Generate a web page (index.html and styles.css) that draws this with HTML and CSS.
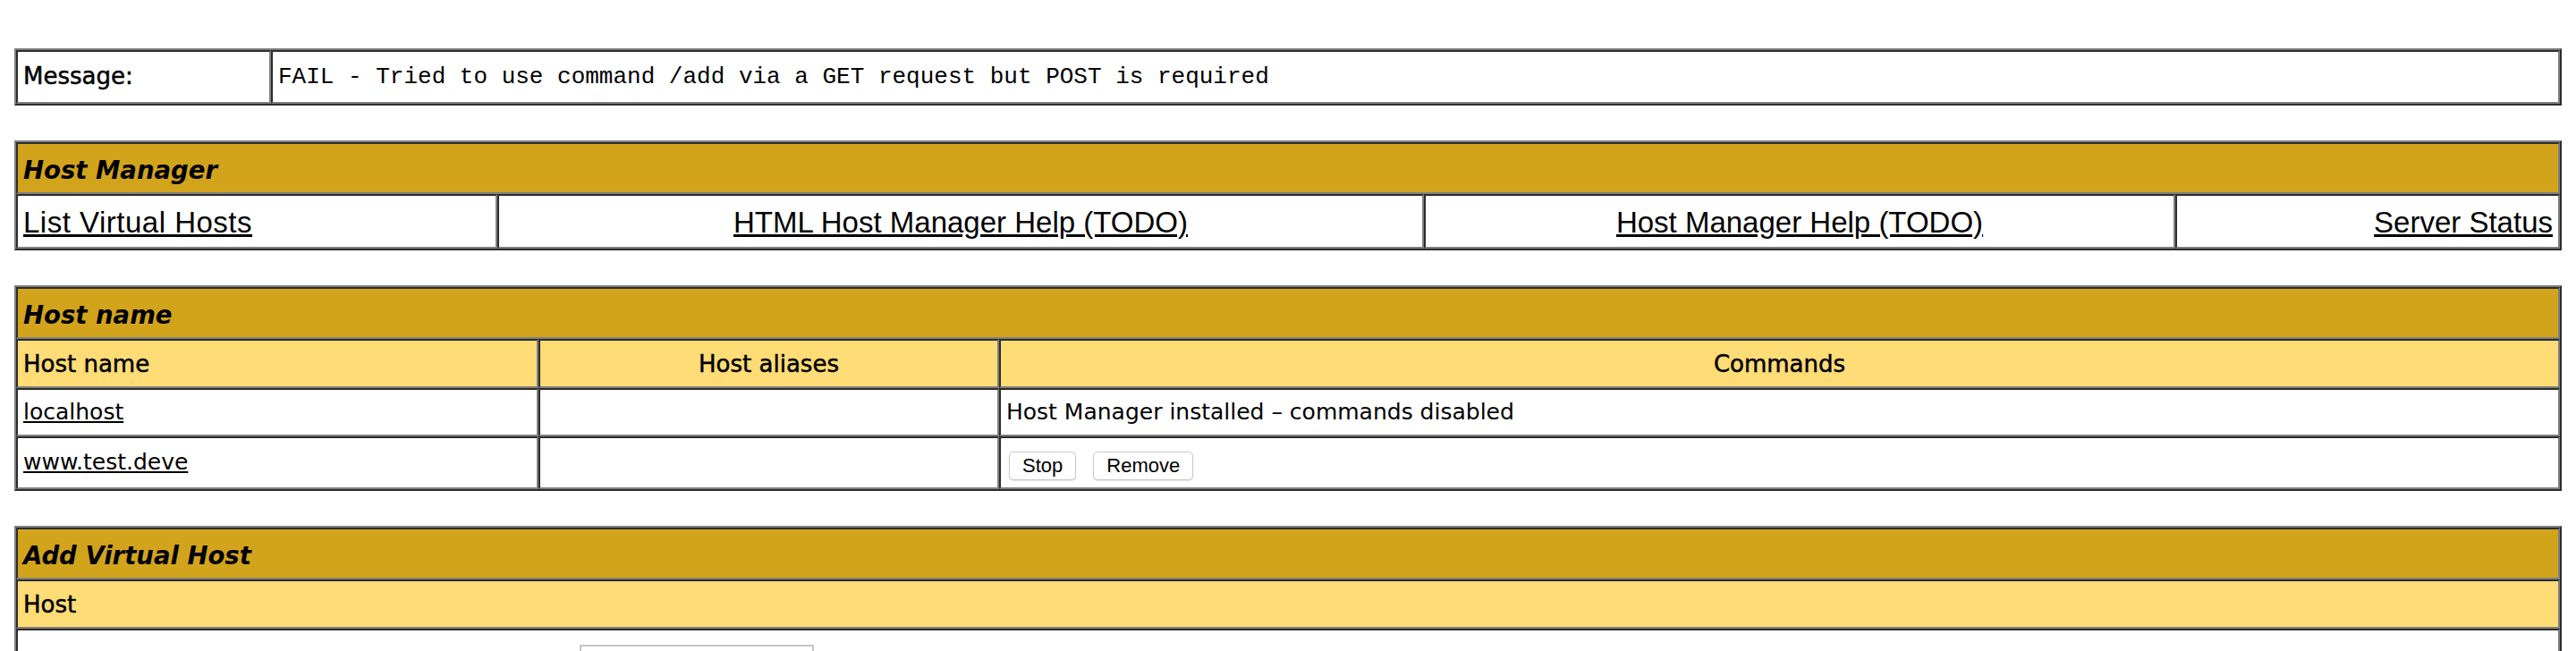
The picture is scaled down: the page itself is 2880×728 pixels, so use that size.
FILE: index.html
```html
<!DOCTYPE html>
<html>
<head>
<meta charset="utf-8">
<title>/host-manager</title>
<link rel="stylesheet" href="styles.css">
</head>
<body>
<div class="page">

<table class="grid">
  <colgroup><col class="c-msg-label"><col></colgroup>
  <tr class="h-msg">
    <td class="msg-label">Message:</td>
    <td class="msg-text"><pre>FAIL - Tried to use command /add via a GET request but POST is required</pre></td>
  </tr>
</table>

<table class="grid">
  <colgroup><col class="c-nav1"><col class="c-nav2"><col class="c-nav3"><col></colgroup>
  <tr class="h-title">
    <td colspan="4" class="title">Host Manager</td>
  </tr>
  <tr class="h-nav">
    <td class="nav nav-left"><a href="#" class="nav-wide">List Virtual Hosts</a></td>
    <td class="nav nav-center"><a href="#">HTML Host Manager Help (TODO)</a></td>
    <td class="nav nav-center"><a href="#">Host Manager Help (TODO)</a></td>
    <td class="nav nav-right"><a href="#">Server Status</a></td>
  </tr>
</table>

<table class="grid">
  <colgroup><col class="c-host1"><col class="c-host2"><col></colgroup>
  <tr class="h-title">
    <td colspan="3" class="title">Host name</td>
  </tr>
  <tr class="h-head">
    <td class="header header-left">Host name</td>
    <td class="header header-center">Host aliases</td>
    <td class="header header-center">Commands</td>
  </tr>
  <tr class="h-row1">
    <td class="row"><a href="#">localhost</a></td>
    <td class="row"></td>
    <td class="row">Host Manager installed – commands disabled</td>
  </tr>
  <tr class="h-row2">
    <td class="row row-link"><a href="#">www.test.deve</a></td>
    <td class="row"></td>
    <td class="row row-cmds">
      <div class="cmds">
        <button type="button" class="btn">Stop</button>
        <button type="button" class="btn">Remove</button>
      </div>
    </td>
  </tr>
</table>

<table class="grid">
  <tr class="h-title">
    <td class="title">Add Virtual Host</td>
  </tr>
  <tr class="h-head">
    <td class="header header-left">Host</td>
  </tr>
  <tr>
    <td class="form-cell">
      <div class="form-row">
        <input type="text" class="form-input" aria-label="Name">
      </div>
    </td>
  </tr>
</table>

</div>
</body>
</html>
```

FILE: styles.css
```css
html, body {
  margin: 0;
  padding: 0;
  background: #ffffff;
}

body {
  margin: 16px;
  font-family: "DejaVu Sans", sans-serif;
  color: #000;
}

.page {
  padding-top: 38px;
}

.grid {
  width: 100%;
  table-layout: fixed;
  border-collapse: separate;
  border-spacing: 0;
  border: 2px outset #808080;
  margin-bottom: 39px;
}

.grid td {
  border: 2px inset #808080;
  padding: 0 6px;
  vertical-align: top;
  overflow: hidden;
  white-space: nowrap;
}

.grid a {
  color: #000;
  text-decoration: underline;
}

/* column widths */
.c-msg-label { width: 285px; }
.c-nav1 { width: 538px; }
.c-nav2 { width: 1036px; }
.c-nav3 { width: 840px; }
.c-host1 { width: 584px; }
.c-host2 { width: 515px; }

/* row heights */
.h-msg { height: 60px; }
.h-title { height: 58px; }
.h-nav { height: 61px; }
.h-head { height: 55px; }
.h-row1 { height: 54px; }
.h-row2 { height: 59px; }

/* message */
.grid td.msg-label {
  font-family: "DejaVu Sans", sans-serif;
  font-weight: normal;
  -webkit-text-stroke: 0.5px #000;
  font-size: 26px;
  padding-top: 12px;
}

.grid td.msg-text {
  padding-top: 13px;
}

.msg-text pre {
  margin: 0;
  font-family: "Liberation Mono", monospace;
  font-size: 26px;
}

/* titles */
.grid td.title {
  background: #D2A41C;
  font-family: "DejaVu Sans", sans-serif;
  font-weight: bold;
  font-style: italic;
  font-size: 27.5px;
  padding-top: 13px;
}

/* nav links */
.grid td.nav {
  font-family: "Liberation Sans", Arial, sans-serif;
  font-size: 33px;
  padding-top: 11px;
}

.nav-wide {
  letter-spacing: 0.5px;
}

.nav-left { text-align: left; }
.nav-center { text-align: center; }
.nav-right { text-align: right; }

/* headers */
.grid td.header {
  background: #FFDC75;
  font-family: "DejaVu Sans", sans-serif;
  font-weight: normal;
  -webkit-text-stroke: 0.5px #000;
  font-size: 26px;
  padding-top: 11px;
}

.header-left { text-align: left; }
.header-center { text-align: center; }

/* rows */
.grid td.row {
  font-family: "DejaVu Sans", sans-serif;
  font-size: 25px;
  padding-top: 10px;
}

.grid td.row-link {
  padding-top: 12px;
}

.grid td.row-cmds {
  padding-top: 15px;
}

.cmds {
  display: flex;
  gap: 19px;
  padding-left: 3px;
}

.btn {
  font-family: "Liberation Sans", Arial, sans-serif;
  font-size: 22px;
  height: 32px;
  padding: 0 14px;
  margin: 0;
  background: #ffffff;
  color: #000;
  border: 1px solid #c9c9c9;
  border-radius: 5px;
  box-shadow: 0 1px 1px rgba(0, 0, 0, 0.12);
  line-height: 30px;
}

/* add host form */
.grid td.form-cell {
  padding: 16px 6px 6px;
}

.form-row {
  display: flex;
  padding-left: 622px;
  margin-bottom: 8px;
}

.form-input {
  width: 262px;
  height: 40px;
  box-sizing: border-box;
  border: 2px solid #c4c4c4;
  background: #fff;
  margin: 0;
  padding: 0 4px;
}
```
